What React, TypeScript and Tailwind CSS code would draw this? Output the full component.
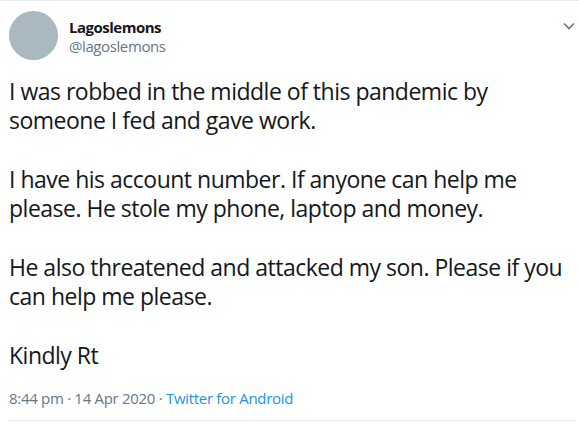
import React from "react";

export default function App() {
  const lines: (string | null)[] = [
    "I was robbed in the middle of this pandemic by",
    "someone I fed and gave work.",
    null,
    "I have his account number. If anyone can help me",
    "please. He stole my phone, laptop and money.",
    null,
    "He also threatened and attacked my son. Please if you",
    "can help me please.",
    null,
    "Kindly Rt",
  ];
  return (
    <div
      className="w-[579px] h-[425px] bg-white border-t border-[#e6ecf0] overflow-hidden"
      style={{ fontFamily: '"Open Sans", "Noto Sans", sans-serif' }}
    >
      <div className="pl-[9px] pr-[4px]">
        <div className="flex items-start pt-[10px]">
          <div className="w-[49px] h-[49px] rounded-full bg-[#aab8c2] shrink-0" />
          <div className="ml-[11px] flex-1 pt-[7px]">
            <div className="text-[15px] font-bold text-[#14171a] leading-[18px] tracking-[-0.5px]">Lagoslemons</div>
            <div className="text-[15px] text-[#657786] leading-[18px] mt-[1px] tracking-[-0.4px]">@lagoslemons</div>
          </div>
          <svg width="12" height="8" viewBox="0 0 12 8" className="mt-[11px]">
            <path d="M1 1.5 L6 6.5 L11 1.5" fill="none" stroke="#657786" strokeWidth="1.6" />
          </svg>
        </div>
        <div className="mt-[17px] text-[23px] leading-[29.33px] text-[#14171a] whitespace-nowrap tracking-[-0.5px]">
          {lines.map((l, i) => (
            <div key={i} className="h-[29.33px]">{l ?? "\u00a0"}</div>
          ))}
        </div>
        <div className="mt-[18px] text-[15px] leading-[20px] text-[#657786] whitespace-nowrap tracking-[-0.3px]">
          8:44 pm · 14 Apr 2020 · <span className="text-[#1b95e0]">Twitter for Android</span>
        </div>
        <div className="mt-[12px] border-t border-[#e6ecf0]" />
      </div>
    </div>
  );
}
